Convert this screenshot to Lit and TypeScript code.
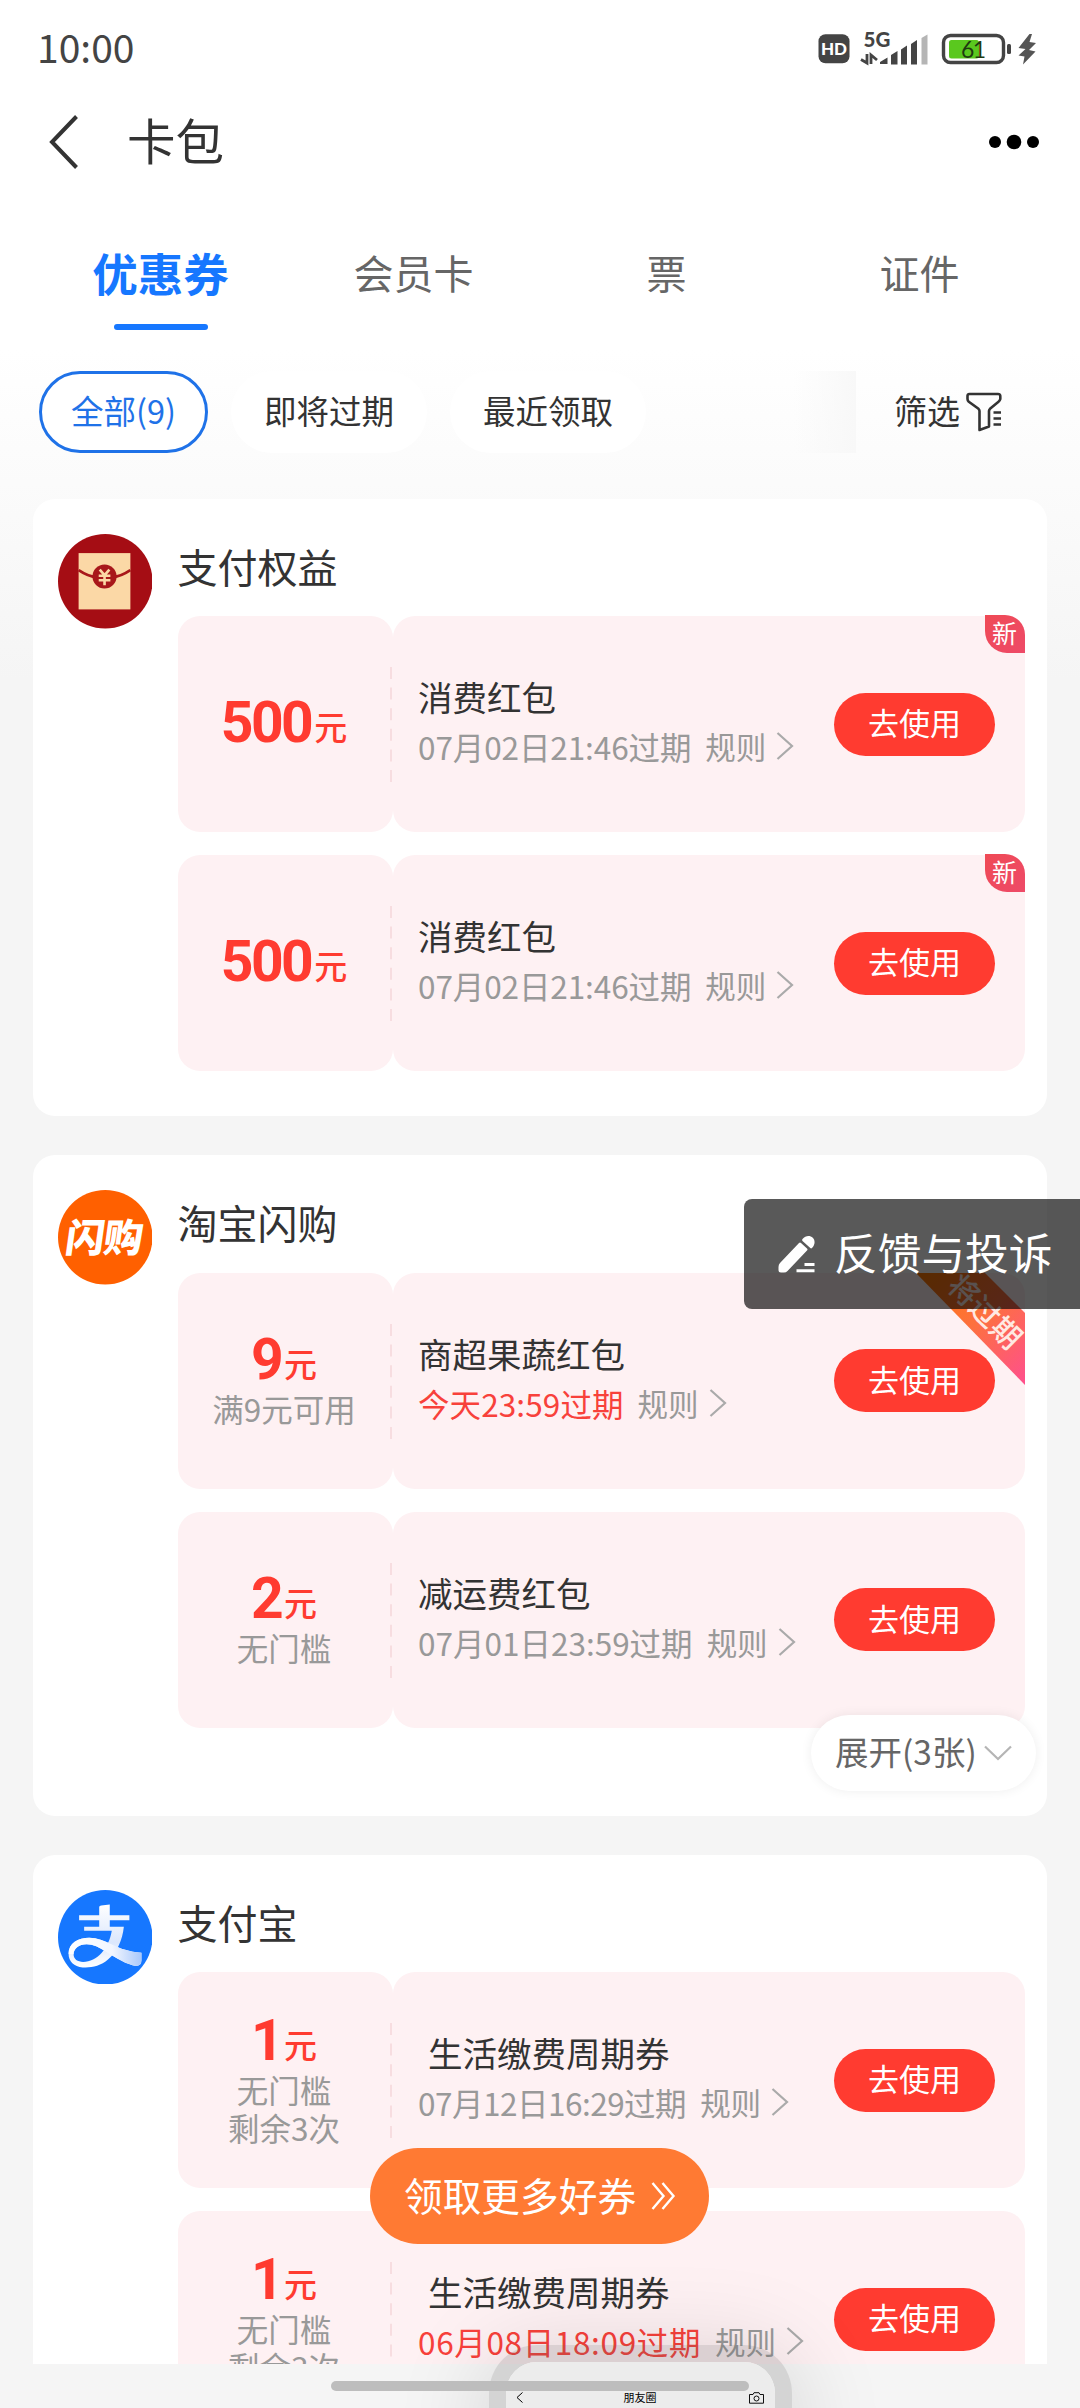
import { LitElement, html, css, svg, nothing } from "lit";
import { customElement, property } from "lit/decorators.js";
import { classMap } from "lit/directives/class-map.js";
import { styleMap } from "lit/directives/style-map.js";

interface Coupon {
  amount: string;
  limits: string[];
  title: string;
  indent?: boolean;
  expiry: string;
  tracking: number;
  urgent?: boolean;
  isNew?: boolean;
  ribbon?: string;
}

interface Shop {
  name: string;
  logo: "envelope" | "flash" | "alipay";
  coupons: Coupon[];
  more?: string;
}

const SHOPS: Shop[] = [
  {
    name: "支付权益",
    logo: "envelope",
    coupons: [
      { amount: "500", limits: [], title: "消费红包", expiry: "07月02日21:46过期", tracking: -0.1, isNew: true },
      { amount: "500", limits: [], title: "消费红包", expiry: "07月02日21:46过期", tracking: -0.1, isNew: true },
    ],
  },
  {
    name: "淘宝闪购",
    logo: "flash",
    more: "展开(3张)",
    coupons: [
      { amount: "9", limits: ["满9元可用"], title: "商超果蔬红包", expiry: "今天23:59过期", tracking: 0.1, urgent: true, ribbon: "将过期" },
      { amount: "2", limits: ["无门槛"], title: "减运费红包", expiry: "07月01日23:59过期", tracking: 0 },
    ],
  },
  {
    name: "支付宝",
    logo: "alipay",
    coupons: [
      { amount: "1", limits: ["无门槛", "剩余3次"], title: "生活缴费周期券", indent: true, expiry: "07月12日16:29过期", tracking: -0.5 },
      { amount: "1", limits: ["无门槛", "剩余3次"], title: "生活缴费周期券", indent: true, expiry: "06月08日18:09过期", tracking: 0.65, urgent: true },
    ],
  },
];

const LOGOS = {
  envelope: svg`
    <circle cx="47" cy="47" r="47" fill="#a50d14"/>
    <rect x="20.5" y="19" width="51.5" height="56" fill="#fbd8a6"/>
    <path d="M20.5 36 C28 41 33 42.500 38 43 M72 36 C64.500 41 59.500 42.500 54.500 43" fill="none" stroke="#a8171a" stroke-width="2.800"/>
    <circle cx="46.300" cy="42.300" r="12" fill="#a8171a"/>
    <path d="M41.500 35.500 L46.300 41 L51.100 35.500 M46.300 41 V51 M40.500 41.500 H52.100 M40.500 46 H52.100" fill="none" stroke="#fbd8a6" stroke-width="2.600"/>`,
  flash: svg`
    <circle cx="47" cy="47" r="47" fill="#ff6000"/>
    <text class="flash-name" x="46" y="61.500" text-anchor="middle" transform="skewX(-8) translate(6.500 0)">闪购</text>`,
  alipay: svg`
    <defs>
      <linearGradient id="tail" x1="0" y1="0" x2="1" y2="0">
        <stop offset="0" stop-color="#fff"/><stop offset=".6" stop-color="#f2f6ff"/><stop offset="1" stop-color="#a9c8fb"/>
      </linearGradient>
      <linearGradient id="stem" x1="0" y1="0" x2="0" y2="1">
        <stop offset="0" stop-color="#fff"/><stop offset=".6" stop-color="#dbe7fd"/><stop offset="1" stop-color="#fff"/>
      </linearGradient>
    </defs>
    <circle cx="47" cy="47" r="47" fill="#1677ff"/>
    <path d="M41 17 Q41 15.500 43 15.300 L51.500 14.500 V25 H71 V30 H51.500 V36.500 H65.500 C64 50 59 61 50 69 C42 76 33 77.500 24.500 77 C16 76.500 10.500 71 10.500 63.500 C10.500 53 20 47.500 31 47.500 C39 47.500 46 50.500 53 54 C62 58.500 71 61.500 83 62.500 V70 Q83 75.500 77.500 75.500 C69 74.500 58 68 48 61.500 C41 57 35 54 28.500 54 C20.500 54 15.500 58.500 15.500 64 C15.500 69 19.500 71.500 25 71.500 C39 71.500 50.500 58 53.500 40.500 H26 V36.500 H41 V30 H21 V25 H41 Z" fill="url(#stem)"/>
    <path d="M31 47.500 C39 47.500 46 50.500 53 54 C62 58.500 71 61.500 83 62.500 V70 Q83 75.500 77.500 75.500 C69 74.500 58 68 48 61.500 C41 57 35 54 28.500 54 C20.500 54 15.500 58.500 15.500 64 L10.500 63.500 C10.500 53 20 47.500 31 47.500 Z" fill="url(#tail)"/>`,
};

@customElement("coupon-ticket")
class CouponTicket extends LitElement {
  @property({ attribute: false }) coupon!: Coupon;

  static styles = css`
    :host { display: block; }
    .ticket { display: flex; height: 216px; position: relative; }
    .value, .detail { background: #fef1f3; border-radius: 22px; box-sizing: border-box; }
    .value {
      width: 215px; display: flex; flex-direction: column; align-items: center; justify-content: center;
      padding: 0 2px 3px 0;
    }
    .seam { position: absolute; left: 212.500px; top: 51px; width: 2px; height: 115px; }
    .amount { display: flex; align-items: baseline; gap: 3px; height: 58px; line-height: 58px; color: #ff3b30; }
    .number { font: 700 57px/58px Roboto, sans-serif; letter-spacing: -2.600px; }
    .unit { font-size: 33px; font-weight: 500; line-height: 58px; position: relative; top: -2px; }
    .limit { font-size: 31.500px; line-height: 38px; color: #999; white-space: nowrap; }
    .detail { flex: 1; display: flex; align-items: center; padding: 0 29.500px 0 25.500px; }
    .text { flex: 1; display: flex; flex-direction: column; padding-bottom: 6px; }
    .title { font-size: 34.500px; line-height: 50px; color: #333; font-weight: 400; white-space: nowrap; }
    .title.indent { padding-left: 10px; }
    .meta { display: flex; align-items: center; height: 50px; font-size: 31.500px; line-height: 50px; color: #999; white-space: nowrap; }
    .urgent { color: #f8413b; }
    .rule { margin-left: 14px; margin-right: 10px; font-size: 30.500px; }
    .use {
      width: 161px; height: 63px; border: 0; border-radius: 32px; background: #ff3b30; color: #fff;
      font: 400 31px/58px "Noto Sans CJK SC", sans-serif; padding: 0 0 4px; flex: none;
    }
    .new {
      position: absolute; right: 0; top: -1px; width: 40px; height: 38px; border-radius: 0 20px 0 22px;
      background: linear-gradient(135deg, #ef4a55, #ee4a68); color: #fff; font-size: 25px; line-height: 34px; text-align: center;
    }
    .ribbon { position: absolute; right: 0; top: 0; }
    .ribbon text { font: 500 30px "Noto Sans CJK SC", sans-serif; fill: #ffe9e2; }
  `;

  render() {
    const c = this.coupon;
    return html`
      <div class="ticket">
        <div class="value">
          <div class="amount"><span class="number">${c.amount}</span><span class="unit">元</span></div>
          ${c.limits.map((l) => html`<div class="limit">${l}</div>`)}
        </div>
        <div class="detail">
          <div class="text">
            <div class=${classMap({ title: true, indent: !!c.indent })}>${c.title}</div>
            <div class="meta">
              <span class=${classMap({ urgent: !!c.urgent })} style=${styleMap({ letterSpacing: `${c.tracking}px` })}>${c.expiry}</span>
              <span class="rule">规则</span>
              <svg width="18" height="28" viewBox="0 0 18 28"><path d="M1.500 1 L16 14 L1.500 27" fill="none" stroke="#aaa" stroke-width="2.200"/></svg>
            </div>
          </div>
          <button class="use">去使用</button>
        </div>
        <svg class="seam" viewBox="0 0 2 115"><path d="M1 0 V115" stroke="#f7dde0" stroke-width="2" stroke-dasharray="12 8.600"/></svg>
        ${c.isNew ? html`<div class="new">新</div>` : nothing}
        ${c.ribbon
          ? html`<svg class="ribbon" width="110" height="112" viewBox="0 0 110 112">
              <defs><linearGradient id="rib" x1="0" y1="0" x2="1" y2="1">
                <stop offset="0" stop-color="#ff7a00"/><stop offset=".5" stop-color="#fd7040"/><stop offset="1" stop-color="#ff4f8e"/>
              </linearGradient></defs>
              <path d="M1 0 H70 L110 40 V112 Z" fill="url(#rib)"/>
              <text text-anchor="middle" transform="translate(70 38.500) rotate(45)" y="11">${c.ribbon}</text>
            </svg>`
          : nothing}
      </div>
    `;
  }
}

@customElement("shop-card")
class ShopCard extends LitElement {
  @property({ attribute: false }) shop!: Shop;

  static styles = css`
    :host { display: block; }
    .card {
      position: relative; display: grid; grid-template-columns: 96px 847px; column-gap: 24px;
      background: #fff; border-radius: 22px; padding: 0 0 45px 24.500px; box-sizing: border-box; width: 1014px;
    }
    .card.more { padding-bottom: 88px; }
    .logo { width: 94.500px; height: 94.500px; margin-top: 35px; }
    .flash-name { font: 900 39px "Noto Sans CJK SC", sans-serif; fill: #fff; letter-spacing: -1px; }
    .body { display: flex; flex-direction: column; }
    .name { height: 117.400px; line-height: 134px; font-size: 40px; color: #333; padding-left: 0; }
    .tickets { display: flex; flex-direction: column; gap: 23px; }
    .expand {
      position: absolute; right: 11px; bottom: 25px; width: 225px; height: 76px; border-radius: 38px; background: #fff;
      box-shadow: 0 0 12px rgba(0, 0, 0, .07); box-sizing: border-box; padding: 0 24px 4px; display: flex; align-items: center;
      justify-content: space-between; font-size: 33.500px; color: #666; white-space: nowrap;
    }
    .expand svg { position: relative; top: 2px; }
  `;

  render() {
    const s = this.shop;
    return html`
      <section class=${classMap({ card: true, more: !!s.more })}>
        <svg class="logo" viewBox="0 0 94 94">${LOGOS[s.logo]}</svg>
        <div class="body">
          <div class="name">${s.name}</div>
          <div class="tickets">${s.coupons.map((c) => html`<coupon-ticket .coupon=${c}></coupon-ticket>`)}</div>
        </div>
        ${s.more
          ? html`<div class="expand"><span>${s.more}</span>
              <svg width="28" height="16" viewBox="0 0 28 16"><path d="M1 1.500 L14 14 L27 1.500" fill="none" stroke="#b5b5b5" stroke-width="2.200"/></svg></div>`
          : nothing}
      </section>
    `;
  }
}

@customElement("app-root")
class AppRoot extends LitElement {
  static styles = css`
    :host { display: block; font-family: "Noto Sans CJK SC", sans-serif; }
    .screen {
      position: relative; width: 1080px; height: 2408px; overflow: hidden;
      background: linear-gradient(#fff 0, #fff 350px, #f5f5f5 680px);
      display: flex; flex-direction: column;
    }
    .status { height: 98px; display: flex; align-items: center; justify-content: space-between; padding: 0 42px 0 37px; box-sizing: border-box; }
    .clock { font-size: 39px; color: #444; padding-bottom: 7px; line-height: 50px; }
    .hd { font: 900 17px Lato, sans-serif; fill: #fff; }
    .net { font: 900 20.500px Lato, sans-serif; fill: #444; }
    .pct { font: 400 23px Lato, sans-serif; fill: #1f3a10; letter-spacing: -1.500px; }
    .nav { height: 88px; display: flex; align-items: center; padding: 0 40px 0 48px; }
    .nav h1 { flex: 1; margin: 0 0 0 47px; font-weight: 400; font-size: 48.500px; line-height: 70px; color: #333; padding-bottom: 6px; }
    .tabs { display: grid; grid-template-columns: repeat(4, 253px); padding: 51px 0 0 34px; }
    .tab { display: flex; flex-direction: column; align-items: center; gap: 17px; font-size: 40px; line-height: 70px; color: #666; }
    .tab.active { font-size: 45.500px; font-weight: 700; color: #1677ff; }
    .bar { width: 94px; height: 6px; border-radius: 3px; background: #1677ff; }
    .filters { display: flex; align-items: center; margin-top: 41px; height: 82px; padding: 0 78px 0 39px; gap: 23px; }
    .chip {
      height: 82px; line-height: 78px; border-radius: 41px; padding: 0 33px; font-size: 32.500px; color: #333; box-sizing: border-box;
      background: #fff; white-space: nowrap;
    }
    .chip.active { width: 169px; padding: 0; text-align: center; border: 3px solid #1f72e8; line-height: 72px; color: #1f72e8; }
    .fade { margin-left: auto; width: 62px; height: 82px; background: linear-gradient(90deg, rgba(246, 246, 246, 0), #f8f8f8); }
    .pick { display: flex; align-items: center; margin-left: 15px; gap: 6px; font-size: 33px; color: #333; line-height: 78px; }
    .pick span { padding-bottom: 4px; }
    .list { height: 1865px; margin-top: 46px; padding-left: 33px; overflow: hidden; display: flex; flex-direction: column; gap: 39px; flex: none; }
    .bottom { flex: 1; background: #f5f5f5; display: flex; justify-content: center; align-items: flex-start; }
    .home { position: absolute; left: 331px; top: 2381px; width: 418px; height: 10px; border-radius: 5px; background: #bdbdbd; }
    .feedback {
      position: absolute; right: 0; top: 1199px; width: 336px; height: 110px; box-sizing: border-box; border-radius: 8px 0 0 8px;
      background: rgba(0, 0, 0, .65); color: #fff; display: flex; align-items: center; gap: 19px; padding-left: 34px;
      font-size: 43.700px; white-space: nowrap;
    }
    .feedback span { padding-bottom: 7px; }
    .claim {
      position: absolute; left: 370px; top: 2148px; width: 339px; height: 96px; border-radius: 48px; background: #ff7a33; color: #fff;
      display: flex; align-items: center; gap: 15px; padding-left: 34px; box-sizing: border-box; font-size: 38.700px; white-space: nowrap;
    }
    .claim span { padding-bottom: 5px; }
    .peek {
      position: absolute; left: 489px; top: 2345px; width: 303px; height: 120px; box-sizing: border-box; border: 17px solid rgba(80, 80, 80, .2);
      border-bottom: 0; border-radius: 48px 48px 0 0; box-shadow: 0 10px 90px 6px rgba(0, 0, 0, .13);
    }
    .peek-body {
      height: 100px; border-radius: 31px 31px 0 0; background: #ececec; box-sizing: border-box;
      padding: 29px 11px 0 10px; display: grid; grid-template-columns: 15px 1fr 15px; align-items: start; font-size: 11px; line-height: 12px;
      color: #000; text-align: center;
    }
    .peek-body svg { display: block; margin-top: 1px; }
  `;

  render() {
    return html`
      <div class="screen">
        <div class="status">
          <div class="clock">10:00</div>
          <svg width="222" height="36" viewBox="816 31 222 36">
            <rect x="818.500" y="34.300" width="31" height="29" rx="7" fill="#444"/>
            <text class="hd" x="834" y="54.800" text-anchor="middle">HD</text>
            <text class="net" x="863.500" y="46.800">5G</text>
            <path d="M861 59.500 L867 63 V54 M871 64 V55 L877 60" fill="none" stroke="#444" stroke-width="2.800"/>
            <path d="M880 64 V62 L887.500 57.500 V64 Z M891 64.500 V55 L897.500 51 V64.500 Z M901 64.500 V49.500 L907 45.500 V64.500 Z M911 64.500 V44 L917 40 V64.500 Z" fill="#444"/>
            <path d="M921.500 64.500 V38 L927.500 34.500 V64.500 Z" fill="#b5b5b5"/>
            <rect x="943.500" y="35.500" width="60" height="27" rx="7" fill="#fff" stroke="#444" stroke-width="3.400"/>
            <rect x="949" y="40" width="30" height="18.500" rx="2.500" fill="#5ac81e"/>
            <text class="pct" x="961" y="57.500">61</text>
            <rect x="1007" y="44" width="4" height="10" rx="1.500" fill="#444"/>
            <path d="M1029.500 34 L1018.500 48 L1025.500 49 L1018.500 55.500 L1024.500 56.500 L1023 64.500 L1035.500 51.500 L1029 50 L1036 43 L1029.500 42 L1032 34 Z" fill="#555"/>
          </svg>
        </div>
        <div class="nav">
          <svg width="32" height="54" viewBox="0 0 32 54"><path d="M28.500 1.500 L4 27 L28.500 52.500" fill="none" stroke="#333" stroke-width="4"/></svg>
          <h1>卡包</h1>
          <svg width="52" height="16" viewBox="0 0 52 16"><circle cx="7" cy="8" r="6"/><circle cx="26" cy="8" r="7.300"/><circle cx="45" cy="8" r="6"/></svg>
        </div>
        <div class="tabs">
          <div class="tab active">优惠券<div class="bar"></div></div>
          <div class="tab">会员卡</div>
          <div class="tab">票</div>
          <div class="tab">证件</div>
        </div>
        <div class="filters">
          <div class="chip active">全部(9)</div>
          <div class="chip">即将过期</div>
          <div class="chip">最近领取</div>
          <div class="fade"></div>
          <div class="pick"><span>筛选</span>
            <svg width="36" height="40" viewBox="0 0 36 40" fill="none" stroke="#333" stroke-width="2.600">
              <path d="M3.500 2 H32 Q34.500 2 34.300 4.500 V7 Q34 8.500 32.500 9.700 L24 16.800 Q23 17.800 23 19 V34.500 L13.500 38 V19 Q13.500 17.800 12.500 16.800 L2.800 9.700 Q1.500 8.500 1.500 7 V4.500 Q1.300 2 3.500 2 Z" stroke-linejoin="round"/>
              <path d="M27.500 20.500 H35 M27.500 26.500 H35 M27.500 32.500 H35"/>
            </svg>
          </div>
        </div>
        <main class="list">${SHOPS.map((s) => html`<shop-card .shop=${s}></shop-card>`)}</main>
        <div class="bottom"></div>
        <div class="feedback">
          <svg width="37" height="38" viewBox="0 0 37 38" fill="#fff">
            <path d="M21 8 Q22 7 23 8 L29 13.500 Q30 14.500 29 15.500 L9.500 36 Q8 37.500 6 37.500 H3 Q.5 37.500 .5 35 V32 Q.5 29.500 2 28 Z"/>
            <path d="M24.500 4 C27.500 .3 32 0 34.800 2.800 C37.500 5.500 37 10 34 13 C33.300 13.700 32.800 13.500 32.300 13 L24.500 6 C24 5.300 24 4.600 24.500 4 Z"/>
            <path d="M26.500 28 H36.500 V31 H26.500 Z M18.500 34.200 H36.500 V37.300 H18.500 Z"/>
          </svg>
          <span>反馈与投诉</span>
        </div>
        <div class="claim"><span>领取更多好券</span>
          <svg width="25" height="28" viewBox="0 0 25 28" fill="none" stroke="#fff" stroke-width="2.400"><path d="M1.500 1 L12.500 14 L1.500 27 M11.500 1 L22.500 14 L11.500 27"/></svg>
        </div>
        <div class="peek"><div class="peek-body">
          <svg width="8" height="11" viewBox="0 0 8 11"><path d="M6.500 .5 L1 5.500 L6.500 10.500" fill="none" stroke="#000"/></svg>
          <span>朋友圈</span>
          <svg width="15" height="12" viewBox="0 0 15 12" fill="none" stroke="#111"><path d="M.5 2.500 H4 L5 .7 H10 L11 2.500 H14.500 V11.200 H.5 Z"/><circle cx="7.500" cy="6.500" r="2.500"/></svg>
        </div></div>
        <div class="home"></div>
      </div>
    `;
  }
}
